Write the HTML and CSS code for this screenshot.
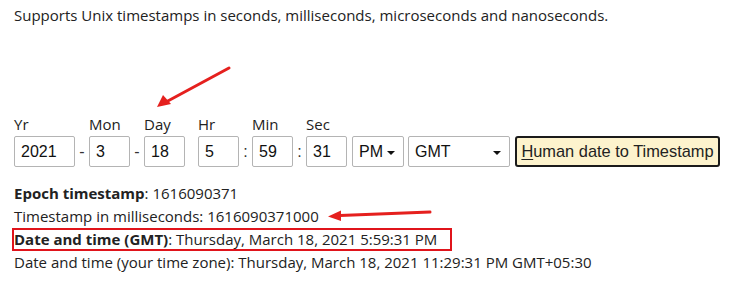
FILE: index.html
```html
<!DOCTYPE html>
<html>
<head>
<meta charset="utf-8">
<link rel="stylesheet" href="styles.css">
</head>
<body>
<div class="page">
  <p class="intro">Supports Unix timestamps in seconds, milliseconds, microseconds and nanoseconds.</p>

  <div class="form">
    <div class="field">
      <span class="lbl">Yr</span>
      <div class="row"><span class="inp w-year">2021</span><span class="sep">-</span></div>
    </div>
    <div class="field">
      <span class="lbl">Mon</span>
      <div class="row"><span class="inp">3</span><span class="sep">-</span></div>
    </div>
    <div class="field">
      <span class="lbl">Day</span>
      <div class="row"><span class="inp">18</span><span class="sep sep-gap"></span></div>
    </div>
    <div class="field">
      <span class="lbl">Hr</span>
      <div class="row"><span class="inp">5</span><span class="sep sep-colon">:</span></div>
    </div>
    <div class="field">
      <span class="lbl">Min</span>
      <div class="row"><span class="inp">59</span><span class="sep sep-colon">:</span></div>
    </div>
    <div class="field">
      <span class="lbl">Sec</span>
      <div class="row"><span class="inp">31</span></div>
    </div>
    <div class="sel sel-ampm"><span>PM</span><i class="caret"></i></div>
    <div class="sel sel-tz"><span>GMT</span><i class="caret"></i></div>
    <button class="btn"><u>H</u>uman date to Timestamp</button>
  </div>

  <div class="results">
    <div class="line"><b>Epoch timestamp</b>: 1616090371</div>
    <div class="line">Timestamp in milliseconds: 1616090371000</div>
    <div class="line boxed"><b>Date and time (GMT)</b>: Thursday, March 18, 2021 5:59:31 PM</div>
    <div class="line">Date and time (your time zone): Thursday, March 18, 2021 11:29:31 PM GMT+05:30</div>
  </div>
</div>

<svg class="annot" width="741" height="301" viewBox="0 0 741 301">
  <line x1="229" y1="68" x2="166" y2="102" stroke="#e5201e" stroke-width="3" stroke-linecap="round"/>
  <polygon points="157,107 163,95 171,104" fill="#e5201e"/>
  <line x1="430" y1="212" x2="340" y2="215.5" stroke="#e5201e" stroke-width="3" stroke-linecap="round"/>
  <polygon points="328,216.5 341,210.5 341,221" fill="#e5201e"/>
</svg>
</body>
</html>
```
FILE: styles.css
```css
html, body {
  margin: 0;
  padding: 0;
  background: #fff;
}

body {
  font-family: "Open Sans", "Liberation Sans", sans-serif;
  font-size: 15px;
  color: #222;
  width: 741px;
  height: 301px;
  overflow: hidden;
  position: relative;
}

.page {
  padding: 5px 0 0 14px;
}

.intro {
  margin: 0;
  line-height: 20px;
}

.form {
  margin-top: 91px;
  display: flex;
  align-items: flex-end;
}

.field {
  display: flex;
  flex-direction: column;
}

.lbl {
  line-height: 16px;
  margin-bottom: 4px;
}

.row {
  display: flex;
  align-items: center;
}

.inp {
  box-sizing: border-box;
  width: 41px;
  height: 31px;
  border: 1px solid #b4b4b4;
  border-radius: 2px;
  font-family: "Liberation Sans", Arial, sans-serif;
  font-size: 16px;
  color: #111;
  line-height: 29px;
  padding-left: 6px;
}

.inp.w-year {
  width: 61px;
}

.sep {
  width: 14px;
  text-align: center;
  font-family: "Liberation Sans", Arial, sans-serif;
  font-size: 16px;
  color: #333;
}

.sep-gap,
.sep-colon {
  width: 13px;
}

.sel {
  box-sizing: border-box;
  height: 31px;
  border: 1px solid #b4b4b4;
  border-radius: 2px;
  display: flex;
  align-items: center;
  justify-content: space-between;
  font-family: "Liberation Sans", Arial, sans-serif;
  font-size: 16px;
  color: #111;
  padding: 0 8px 0 6px;
}

.sel-ampm {
  width: 52px;
  margin-left: 5px;
  padding-right: 8px;
}

.sel-tz {
  width: 102px;
  margin-left: 4px;
  padding-right: 8px;
}

.caret {
  width: 0;
  height: 0;
  border-left: 4px solid transparent;
  border-right: 4px solid transparent;
  border-top: 4px solid #111;
  margin-top: 2px;
}

.btn {
  box-sizing: border-box;
  margin-left: 5px;
  width: 205px;
  height: 31px;
  background: #fdf3cd;
  border: 2px solid #1b1b1b;
  border-radius: 3px;
  font-family: "Liberation Sans", Arial, sans-serif;
  font-size: 16.4px;
  color: #222;
  padding: 0;
  white-space: nowrap;
}

.btn u {
  text-decoration-thickness: 1px;
  text-underline-offset: 2px;
}

.results {
  margin-top: 15px;
}

.line {
  line-height: 23px;
  white-space: nowrap;
}

.line b {
  font-weight: 700;
}

.boxed {
  box-sizing: border-box;
  width: 440px;
  margin-left: -2px;
  border: 2px solid #e0141b;
  line-height: 19px;
}

.annot {
  position: absolute;
  left: 0;
  top: 0;
  pointer-events: none;
}
```
